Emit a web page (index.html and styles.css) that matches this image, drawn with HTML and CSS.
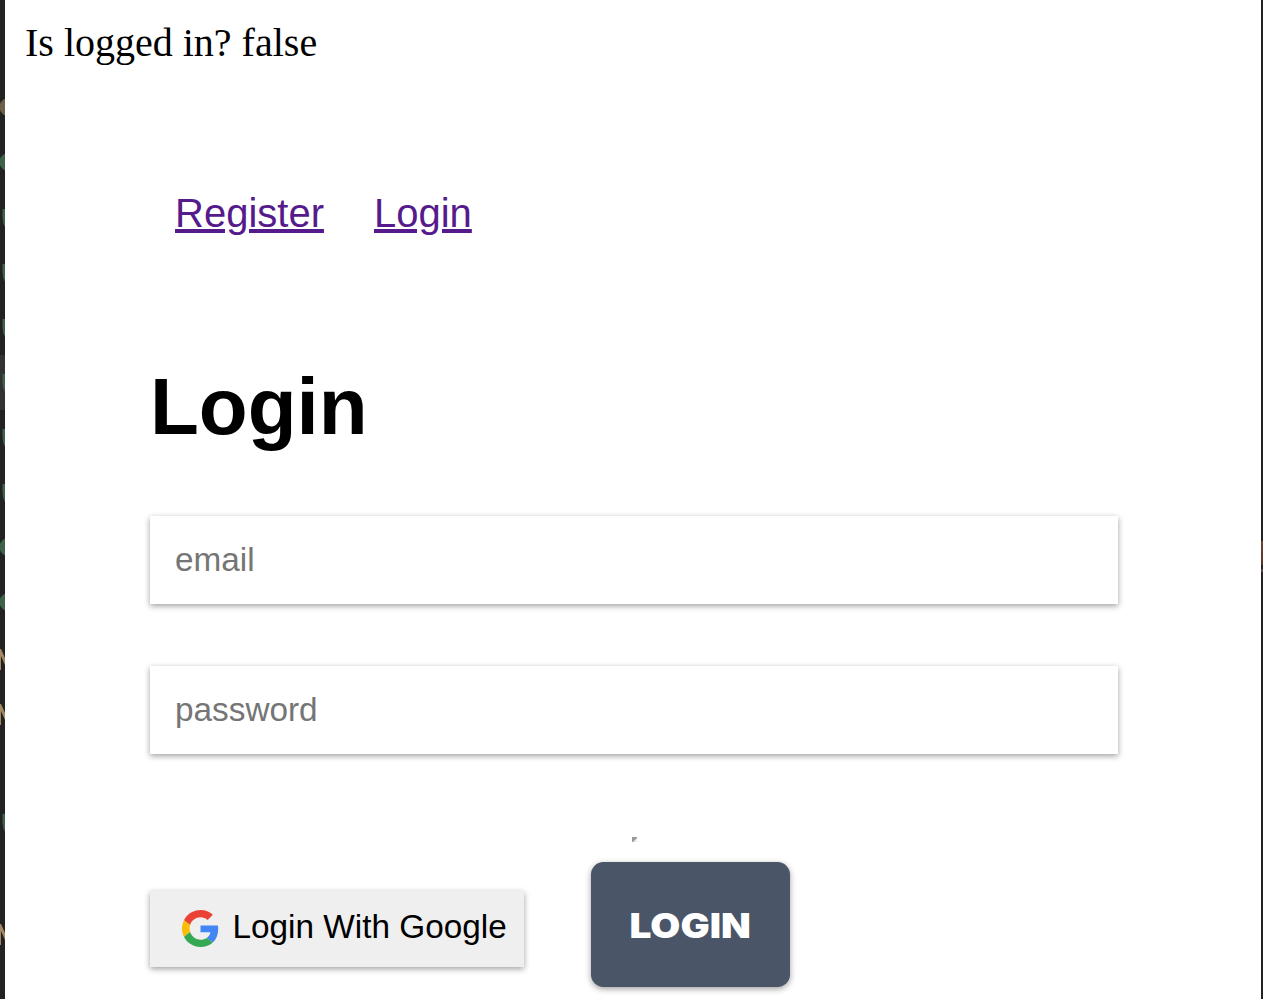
FILE: index.html
```html
<!DOCTYPE html>
<html lang="en">
<head>
<meta charset="utf-8">
<title>Login</title>
<link rel="stylesheet" href="styles.css">
</head>
<body>
<div class="window">
  <svg class="edge" width="5" height="999" viewBox="0 0 5 999" aria-hidden="true">
    <defs>
      <path id="curve" d="M2.5 0H5V18Q2.5 14 2.5 8Z" fill="#3e614b"/>
      <path id="slash" d="M0 0H1L5 9V16L1 7V21H0Z" fill="#a38a64"/>
      <circle id="dot" cx="8.5" cy="0" r="9"/>
    </defs>
    <rect width="5" height="999" fill="#222"/>
    <rect y="355" width="5" height="55" fill="#323235"/>
    <use href="#dot" y="107" fill="#6e5f4a"/>
    <use href="#dot" y="162" fill="#3e614b"/>
    <use href="#curve" y="209"/><use href="#curve" y="264"/><use href="#curve" y="319"/>
    <use href="#curve" y="374"/><use href="#curve" y="429"/><use href="#curve" y="484"/>
    <use href="#dot" y="547" fill="#3e614b"/><use href="#dot" y="602" fill="#3e614b"/>
    <use href="#slash" y="649"/><use href="#slash" y="704"/>
    <use href="#curve" y="814"/>
    <use href="#slash" y="924"/>
  </svg>
  <div class="page">
    <div class="status">Is logged in? false</div>
    <main class="content">
      <nav class="nav">
        <a class="nav-link" href="#">Register</a>
        <a class="nav-link" href="#">Login</a>
      </nav>
      <h1 class="title">Login</h1>
      <form class="form">
        <input class="field" type="text" placeholder="email">
        <input class="field" type="password" placeholder="password">
        <svg class="speck" width="5" height="5" viewBox="0 0 5 5" aria-hidden="true">
          <rect width="5" height="5" fill="#eee"/><path d="M0 0H5V1L1 5H0Z" fill="#999"/>
        </svg>
        <div class="actions">
          <button class="google" type="button">
            <svg class="google-icon" width="37" height="37" viewBox="0 0 48 48" aria-hidden="true">
              <path fill="#EA4335" d="M24 9.5c3.54 0 6.71 1.22 9.21 3.6l6.85-6.85C35.9 2.38 30.47 0 24 0 14.62 0 6.51 5.38 2.56 13.22l7.98 6.19C12.43 13.72 17.74 9.5 24 9.5z"/>
              <path fill="#4285F4" d="M46.98 24.55c0-1.57-.15-3.09-.38-4.55H24v9.02h12.94c-.58 2.96-2.26 5.48-4.78 7.18l7.73 6c4.51-4.18 7.09-10.36 7.09-17.65z"/>
              <path fill="#FBBC05" d="M10.53 28.59c-.48-1.45-.76-2.99-.76-4.59s.27-3.14.76-4.59l-7.98-6.19C.92 16.46 0 20.12 0 24c0 3.88.92 7.54 2.56 10.78l7.97-6.19z"/>
              <path fill="#34A853" d="M24 48c6.48 0 11.93-2.13 15.89-5.81l-7.73-6c-2.15 1.45-4.92 2.3-8.16 2.3-6.26 0-11.57-4.22-13.47-9.91l-7.98 6.19C6.51 42.62 14.62 48 24 48z"/>
            </svg>
            <span class="google-label">Login With Google</span>
          </button>
          <button class="submit" type="button"><span class="submit-label">LOGIN</span></button>
        </div>
      </form>
    </main>
  </div>
  <div class="edge-right"></div>
</div>
</body>
</html>
```
FILE: styles.css
```css
* { box-sizing: border-box; }
body { margin: 0; background: #fff; overflow: hidden; }
.window { display: flex; height: 999px; overflow: hidden; }
.edge { flex: none; display: block; }
.edge-right {
  flex: none;
  width: 2px;
  background: linear-gradient(#222 541px, #6b4236 541px, #5a3529 565px, #222 565px, #222 569px, #60443c 569px, #60443c 572px, #222 572px);
}
.page { flex: 1; padding-top: 20px; }
.status { padding-left: 20px; font: 40px/46px "Liberation Serif", "Times New Roman", serif; color: #000; }
.content { padding: 124px 143px 0 145px; font-family: "Liberation Sans", Arial, sans-serif; }
.nav { display: flex; gap: 50px; padding-left: 25px; }
.nav-link { font-size: 40px; line-height: 46px; color: #551a8b; }
.title { margin: 125px 0 0; font-size: 80px; line-height: 92px; font-weight: 700; color: #000; }
.form { display: flex; flex-direction: column; }
.field {
  width: 968px;
  height: 88px;
  margin: 63px 0 0;
  padding: 0 25px;
  border: 0;
  background: #fff;
  font: 33.333px "Liberation Sans", Arial, sans-serif;
  box-shadow: 0 2px 6px rgba(0, 0, 0, .38);
}
.field::placeholder { color: #757575; opacity: 1; }
.field + .field { margin-top: 62px; }
.speck { margin: 83px 0 0 482px; }
.actions { display: flex; align-items: flex-start; gap: 67px; margin-top: 20px; }
.google {
  display: flex;
  align-items: center;
  gap: 14px;
  width: 374px;
  height: 76px;
  margin: 29px 0 0;
  padding: 0 0 1px 31.5px;
  border: 0;
  background: #efefef;
  color: #000;
  font: 33.333px "Liberation Sans", Arial, sans-serif;
  white-space: nowrap;
  box-shadow: 0 2px 6px rgba(0, 0, 0, .38);
}
.google-label { padding-bottom: 3px; }
.submit {
  width: 199px;
  height: 125px;
  margin: 0;
  padding: 2px 0 0;
  border: 0;
  border-radius: 12.5px;
  background: #4a5568;
  color: #fff;
  font: 900 34px Inter, "Arial Black", sans-serif;
  box-shadow: 0 2px 6px rgba(0, 0, 0, .38);
}
.submit-label { display: inline-block; transform: scaleX(1.14); }
```
